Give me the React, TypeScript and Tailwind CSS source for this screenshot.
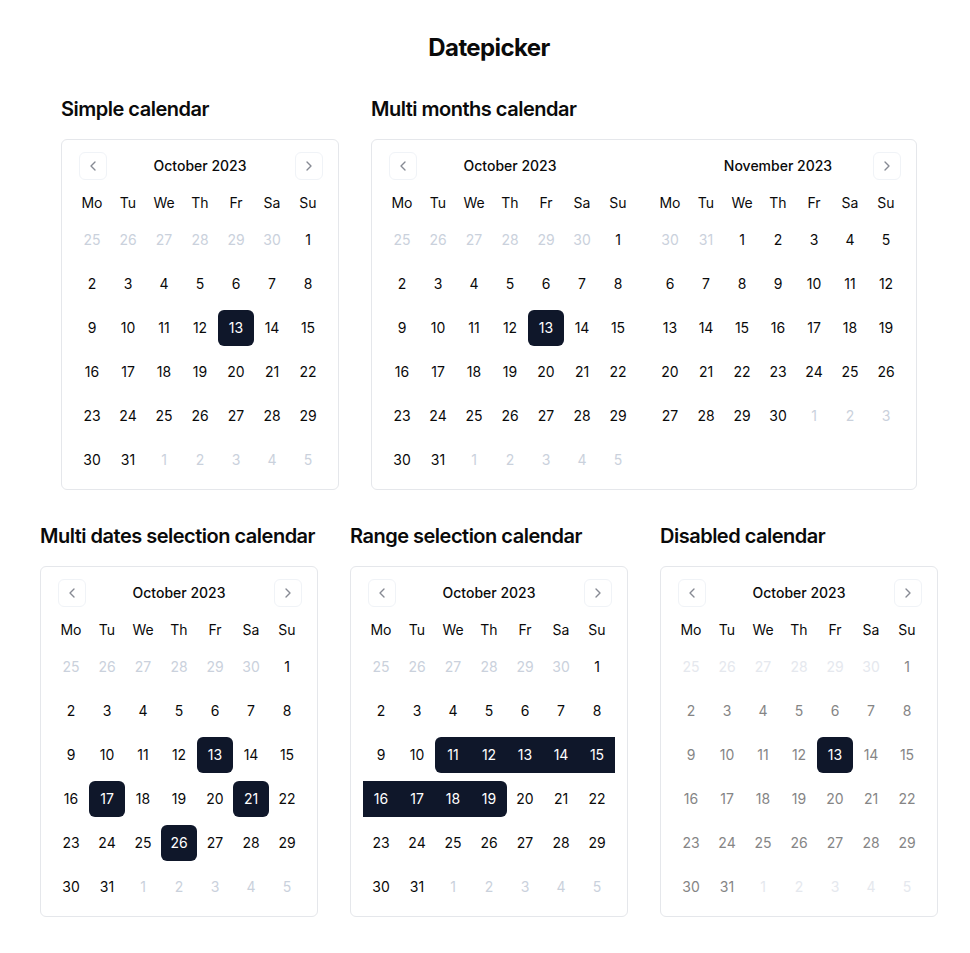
import { ChevronLeft, ChevronRight } from "lucide-react";

type Day = { date: Date; outside: boolean };

type MonthRef = { year: number; month: number };

type Selection = {
    selected?: number[];
    range?: { from: number; to: number };
};

type CalendarProps = {
    months: MonthRef[];
    disabled?: boolean;
} & Selection;

const classNames = (...values: Array<string | false | undefined>) =>
    values.filter(Boolean).join(" ");

const MONTH_NAMES = [
    "January",
    "February",
    "March",
    "April",
    "May",
    "June",
    "July",
    "August",
    "September",
    "October",
    "November",
    "December",
];

const WEEKDAYS = ["Mo", "Tu", "We", "Th", "Fr", "Sa", "Su"];

// weeks start on monday, trailing week is filled up with next month
const buildWeeks = ({ year, month }: MonthRef): Day[][] => {
    const first = new Date(year, month, 1);
    const offset = (first.getDay() + 6) % 7;
    const start = new Date(year, month, 1 - offset);
    const last = new Date(year, month + 1, 0);
    const total = Math.ceil((offset + last.getDate()) / 7) * 7;
    const days: Day[] = [];
    for (let i = 0; i < total; i++) {
        const date = new Date(start.getFullYear(), start.getMonth(), start.getDate() + i);
        days.push({ date, outside: date.getMonth() !== month });
    }
    const weeks: Day[][] = [];
    for (let i = 0; i < days.length; i += 7) weeks.push(days.slice(i, i + 7));
    return weeks;
};

const NavButton = ({ side }: { side: "left" | "right" }) => (
    <button
        type="button"
        aria-label={side === "left" ? "Previous month" : "Next month"}
        className={classNames(
            "absolute top-0 inline-flex h-7 w-7 items-center justify-center rounded-md border border-[#e2e8f0] bg-transparent p-0 text-[#0f172a] opacity-50",
            side === "left" ? "left-[5px]" : "right-[3px]",
        )}
    >
        {side === "left" ? (
            <ChevronLeft className="h-4 w-4" strokeWidth={2} />
        ) : (
            <ChevronRight className="h-4 w-4" strokeWidth={2} />
        )}
    </button>
);

const Month = ({
    month,
    showPrev,
    showNext,
    selected = [],
    range,
    disabled,
}: {
    month: MonthRef;
    showPrev: boolean;
    showNext: boolean;
    disabled?: boolean;
} & Selection) => {
    const weeks = buildWeeks(month);

    return (
        <div className="w-[252px]">
            <div className="relative flex h-7 items-center justify-center">
                {showPrev && <NavButton side="left" />}
                <span className="text-sm font-medium text-[#0a0a0a]">
                    {MONTH_NAMES[month.month]} {month.year}
                </span>
                {showNext && <NavButton side="right" />}
            </div>

            <div className="mt-1 grid h-[38px] grid-cols-7 items-center py-px">
                {WEEKDAYS.map((name) => (
                    <span key={name} className="text-center text-sm text-[#0a0a0a]">
                        {name}
                    </span>
                ))}
            </div>

            <div className="flex flex-col gap-2">
                {weeks.map((week, w) => (
                    <div key={w} className="grid grid-cols-7">
                        {week.map(({ date, outside }) => {
                            const day = date.getDate();
                            const isSelected = !outside && selected.includes(day);
                            const inRange =
                                !outside && !!range && day >= range.from && day <= range.to;
                            const active = isSelected || inRange;

                            return (
                                <div
                                    key={date.toISOString()}
                                    className={classNames(
                                        "flex h-9 w-9 items-center justify-center text-sm",
                                        active && "bg-[#0f172a] text-white",
                                        isSelected && "rounded-md",
                                        inRange && range && day === range.from && "rounded-l-md",
                                        inRange && range && day === range.to && "rounded-r-md",
                                        !active && outside && !disabled && "text-[#cad1dc]",
                                        !active && outside && disabled && "text-[#e5e8ee]",
                                        !active && !outside && !disabled && "text-[#0a0a0a]",
                                        !active && !outside && disabled && "text-[#858585]",
                                    )}
                                >
                                    {day}
                                </div>
                            );
                        })}
                    </div>
                ))}
            </div>
        </div>
    );
};

// selection only refers to the first month shown
const Calendar = ({ months, selected, range, disabled }: CalendarProps) => (
    <div className="flex gap-4 rounded-md border border-[#e5e7eb] bg-white px-3 pb-[11px] pt-3">
        {months.map((month, i) => (
            <Month
                key={`${month.year}-${month.month}`}
                month={month}
                showPrev={i === 0}
                showNext={i === months.length - 1}
                selected={i === 0 ? selected : []}
                range={i === 0 ? range : undefined}
                disabled={disabled}
            />
        ))}
    </div>
);

const Section = ({ title, children }: { title: string; children: React.ReactNode }) => (
    <div className="flex flex-col">
        <h2 className="mb-4 text-xl font-semibold tracking-tight text-[#0a0a0a]">{title}</h2>
        {children}
    </div>
);

const OCTOBER = { year: 2023, month: 9 };
const NOVEMBER = { year: 2023, month: 10 };

export default function App() {
    return (
        <div className="min-h-screen bg-white pl-2 pt-8 font-['Inter',sans-serif] text-[#0a0a0a]">
            <h1 className="text-center text-2xl font-bold tracking-tight">Datepicker</h1>

            <div className="mt-[31px] flex justify-center gap-8">
                <Section title="Simple calendar">
                    <Calendar months={[OCTOBER]} selected={[13]} />
                </Section>
                <Section title="Multi months calendar">
                    <Calendar months={[OCTOBER, NOVEMBER]} selected={[13]} />
                </Section>
            </div>

            <div className="mt-8 flex justify-center gap-8">
                <Section title="Multi dates selection calendar">
                    <Calendar months={[OCTOBER]} selected={[13, 17, 21, 26]} />
                </Section>
                <Section title="Range selection calendar">
                    <Calendar months={[OCTOBER]} range={{ from: 11, to: 19 }} />
                </Section>
                <Section title="Disabled calendar">
                    <Calendar months={[OCTOBER]} selected={[13]} disabled />
                </Section>
            </div>
        </div>
    );
}
